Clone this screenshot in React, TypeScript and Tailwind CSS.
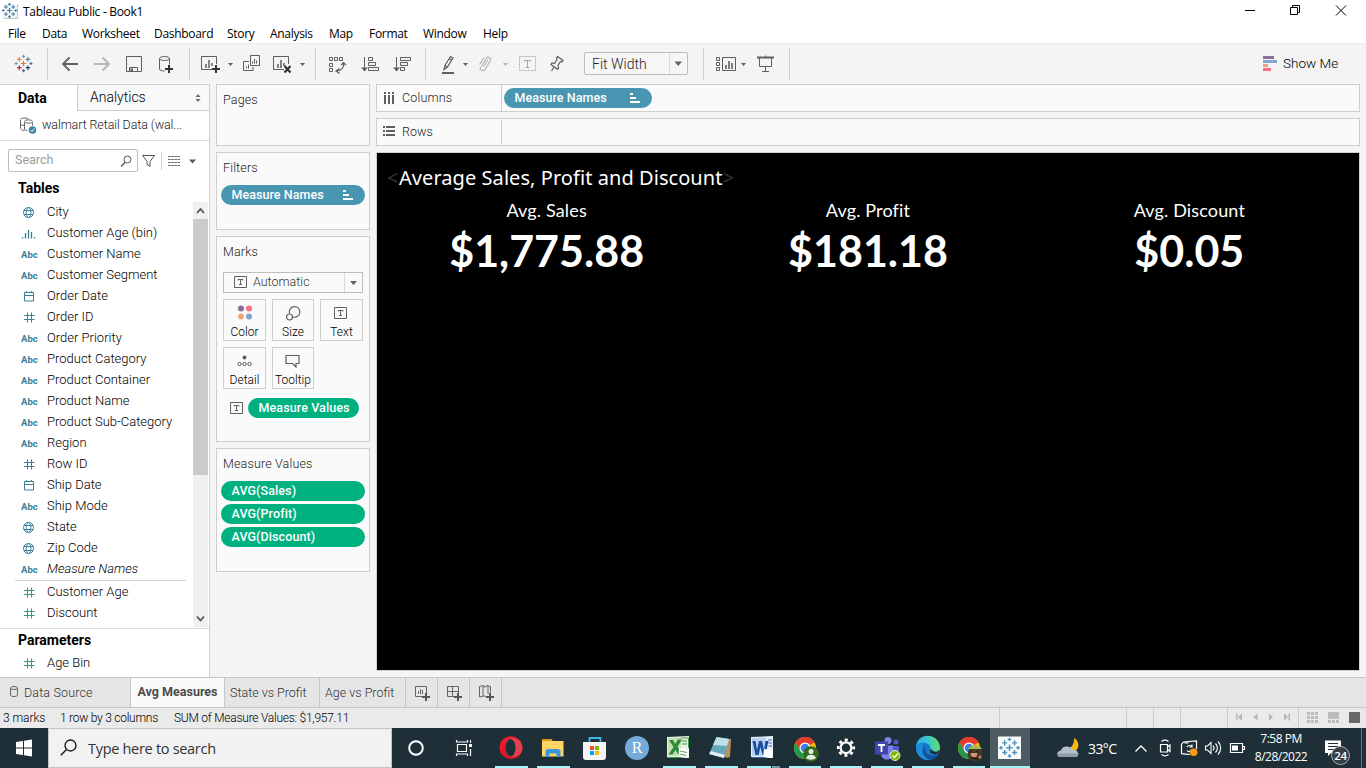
import React from "react";

type Kids = { children?: React.ReactNode };

const G = "#5f5f5f";

/* Icon cell: the view box uses window coordinates, so strokes land on whole pixels. */
function Cell({ x, y, w, h, children }: Kids & { x: number; y: number; w: number; h: number }) {
  return (
    <svg width={w} height={h} viewBox={`${x} ${y} ${w} ${h}`} className="block shrink-0" fill="none">
      {children}
    </svg>
  );
}

const Caret = ({ x, y, c = G }: { x: number; y: number; c?: string }) => (
  <path d={`M${x - 2.5} ${y - 1.5}h5l-2.5 3z`} fill={c} />
);

function Plus({ x, y, r, c, w = 1 }: { x: number; y: number; r: number; c: string; w?: number }) {
  return <path d={`M${x - r} ${y}h${2 * r}M${x} ${y - r}v${2 * r}`} stroke={c} strokeWidth={w} />;
}

function Logo({ x, y, s = 1, mono }: { x: number; y: number; s?: number; mono?: string }) {
  const p: [number, number, number, string][] = [
    [0, 0, 2.8, "#e8762d"],
    [-4.2, -4.2, 2.2, "#eb912c"],
    [4.4, -4.2, 2.2, "#59879b"],
    [-4.2, 4.2, 2.2, "#c72035"],
    [4.4, 4.2, 2.2, "#1f457e"],
    [-7.4, 0, 1.5, "#7199a6"],
    [7.4, 0, 1.5, "#5b6591"],
    [0, -7.2, 1.5, "#7199a6"],
    [0, 7.2, 1.5, "#5b6591"],
  ];
  return (
    <g>
      {p.map(([dx, dy, r, c], i) => (
        <Plus key={i} x={x + dx * s} y={y + dy * s} r={r * s} c={mono ?? c} w={1.2 * s} />
      ))}
    </g>
  );
}

function TitleBar() {
  return (
    <div className="flex h-[22px] items-center bg-white font-['Open_Sans',sans-serif] text-black">
      <Cell x={0} y={0} w={23} h={22}>
        <path d="M3.5 18.5h14v-14" stroke="#c4c4c4" />
        <rect x="3" y="4" width="14" height="14" fill="#f4f4f4" />
        <Logo x={9.5} y={10.5} s={0.85} mono="#2f7fae" />
      </Cell>
      <span className="grow pt-0.5 text-[12px] tracking-[-0.3px]">Tableau Public - Book1</span>
      <Cell x={1240} y={0} w={126} h={22}>
        <path d="M1245 10.5h10" stroke="#000" />
        <path d="M1290.5 7.5h7v7h-7zM1292.5 7v-1.5h7v7h-2" stroke="#000" />
        <path d="M1336 5.5l10 10M1346 5.5l-10 10" stroke="#000" />
      </Cell>
    </div>
  );
}

function MenuBar() {
  return (
    <div className="flex h-[21px] items-center bg-white pl-2 pt-0.5 font-['Open_Sans',sans-serif] text-[12px] tracking-[-0.3px] text-black">
      <span className="w-[34px]">File</span>
      <span className="w-10">Data</span>
      <span className="w-[72px]">Worksheet</span>
      <span className="w-[73px]">Dashboard</span>
      <span className="w-[43px]">Story</span>
      <span className="w-[59px]">Analysis</span>
      <span className="w-10">Map</span>
      <span className="w-[54px]">Format</span>
      <span className="w-[60px]">Window</span>
      <span>Help</span>
    </div>
  );
}

const Sep = () => <div className="my-1 w-px shrink-0 bg-[#cfcfcf]" />;

function Toolbar() {
  return (
    <div className="flex h-[41px] border-t border-[#ececec] bg-[#f4f4f4]">
      <Cell x={0} y={44} w={47} h={40}><Logo x={23.5} y={63.5} /></Cell>
      <Sep />
      <Cell x={48} y={44} w={141} h={40}>
        <path d="M78 64H63M69.5 57.5l-6.5 6.5 6.5 6.5" stroke={G} strokeWidth="1.8" />
        <path d="M94 64h15M102.5 57.5l6.5 6.5-6.5 6.5" stroke="#b4b4b4" strokeWidth="1.8" />
        <path d="M126.5 56.5h15v15h-15z" stroke={G} />
        <path d="M129.5 71v-3.5h8V71" stroke={G} />
        <path d="M130.5 68.5h2.5v3h-2.5z" fill={G} />
        <path d="M159.5 58.5v10.5c0 1.3 2 2 5 2M169.5 58.5v6" stroke={G} />
        <ellipse cx="164.5" cy="58.5" rx="5" ry="2" stroke={G} />
        <Plus x={169} y={69} r={4} c="#333" w={2} />
      </Cell>
      <Sep />
      <Cell x={190} y={44} w={125} h={40}>
        <path d="M212 69.5h-10.5v-13h15V64" stroke={G} />
        <path d="M206 68v-4M209 68v-8M212 66v-3" stroke={G} strokeWidth="1.5" />
        <Plus x={216} y={69} r={4} c="#333" w={2} />
        <Caret x={230.5} y={64.5} />
        <path d="M250.5 55.5h9v10h-9zM249 61.5h-5.5v9h9.5V67" stroke={G} />
        <path d="M252.500 63.500v-2M254.500 63.500v-4.500M256.500 63.500v-3M246.500 68.500v-2M248.500 68.500v-4" stroke={G} />
        <path d="M284 69.5h-10.500v-13h15V64" stroke={G} />
        <path d="M278 68v-4M281 68v-8M284 66v-3" stroke={G} strokeWidth="1.5" />
        <path d="M284.500 66l6 6.500M290.500 66l-6 6.500" stroke="#333" strokeWidth="2.200" />
        <Caret x={302.500} y={64.500} />
      </Cell>
      <Sep />
      <Cell x={316} y={44} w={109} h={40}>
        <path d="M329.500 57.500h3v3h-3zM334.500 57.500h3v3h-3zM339.500 57.500h3v3h-3zM329.500 63.500h3v3h-3zM329.500 68.500h3v3h-3z" stroke={G} />
        <path d="M343.500 63c1 4-2 7.500-6.500 8M339.500 68.500l-3.500 2.500 3.500 2.500M341 65l2.500-2.500 2.500 2.500" stroke={G} strokeWidth="1.200" />
        <path d="M364.500 57v13M368.500 57.500h4v3h-4zM368.500 62.500h7v3h-7zM368.500 67.500h10v3h-10z" stroke={G} />
        <path d="M361 67.500h7l-3.500 4z" fill={G} />
        <path d="M396.500 57v13M400.500 57.500h10v3h-10zM400.500 62.500h7v3h-7zM400.500 67.500h4v3h-4z" stroke={G} />
        <path d="M393 67.500h7l-3.500 4z" fill={G} />
      </Cell>
      <Sep />
      <Cell x={426} y={44} w={158} h={40}>
        <path d="M444 69.500l1-4 5.500-9 2.500 1.500-5.500 9zM445 65.500l2.500 1.500M449 58.500l2.500 1.500" stroke={G} strokeWidth="1.200" />
        <path d="M442 73h12" stroke={G} strokeWidth="2" />
        <Caret x={465.500} y={64.500} />
        <path d="M481.500 66.500l5-8.500c1.500-2 5 0 4 2.500l-5.500 9c-1.500 2.500-6 .5-4.500-2.500M484 66.500l4-7M479.500 64.500l4.500-7" stroke="#b4b4b4" strokeWidth="1.200" />
        <Caret x={505.500} y={64.500} c="#b4b4b4" />
        <path d="M519.500 56.500h16v14h-16z" stroke="#b0b0b0" strokeDasharray="2 1" />
        <path d="M524.500 62v-1.500h6v1.500M527.500 60.500v7M525.500 67.500h4" stroke="#a4a4a4" />
        <path d="M557.500 56.500l5.500 4-1 1.500-1.500-.5-2.500 4 .5 3-1.500.5-6-4.500 1-1.500 2.500.5 2.500-4-.5-1.500zM554 67l-2.500 4" stroke={G} strokeWidth="1.200" />
      </Cell>
      <div className="mt-2 flex h-[23px] w-[104px] shrink-0 rounded-[2px] border border-[#bdbdbd] bg-[#f6f6f6] font-['Roboto',sans-serif] text-[14px] font-light leading-[22px] text-[#222]">
        <span className="w-[85px] border-r border-[#dadada] pl-[7px]">Fit Width</span>
        <Cell x={670} y={53} w={17} h={21}><path d="M674.500 61.500h7.500l-3.750 4.500z" fill={G} /></Cell>
      </div>
      <div className="w-[15px] shrink-0" />
      <Sep />
      <Cell x={704} y={44} w={85} h={40}>
        <path d="M716.500 57.500h3v3h-3zM716.500 62.500h3v3h-3zM716.500 67.500h3v3h-3zM722.500 57.500h13v13h-13z" stroke={G} />
        <path d="M726 69v-4M729 69v-8M732 69v-6" stroke={G} strokeWidth="1.600" />
        <Caret x={743.500} y={64.500} />
        <path d="M757 57.500h17" stroke={G} strokeWidth="2" />
        <path d="M759.500 58v8.500h12V58M765.500 67v4.500M762 71.500h7M765.500 55.500v2" stroke={G} />
      </Cell>
      <Sep />
      <div className="flex grow items-center justify-end pr-[29px]">
        <Cell x={1262} y={44} w={21} h={40}>
          <path d="M1263 56h11v3h-11z" fill="#85719a" />
          <path d="M1263 60h14v3h-14z" fill="#80a5cf" />
          <path d="M1263 64h5v3h-5z" fill="#f2a17c" />
          <path d="M1263 68h8v3h-8z" fill="#fb6e80" />
        </Cell>
        <span className="w-[54px] whitespace-nowrap pb-0.5 font-['Roboto',sans-serif] text-[13.5px] font-light text-black">Show Me</span>
      </div>
    </div>
  );
}

type Kind = "globe" | "bin" | "abc" | "date" | "num" | "numG";

function FieldIcon({ k }: { k: Kind }) {
  const c = k === "numG" ? "#2f9e78" : "#39809b";
  if (k === "abc")
    return <span className="w-[27px] pl-px pt-px font-['Roboto',sans-serif] text-[9.5px] font-bold text-[#39809b]">Abc</span>;
  return (
    <svg width="27" height="21" viewBox="-1 0 27 21" fill="none" stroke={c} className="block shrink-0">
      {k === "globe" && <path d="M7.500 5.500a5 5 0 1 0 .01 0M7.500 5.500c-3.200 2-3.200 8 0 10M7.500 5.500c3.200 2 3.200 8 0 10M3 8.500h9M3 12.500h9" />}
      {k === "bin" && <path d="M1.500 14v1.500M4.500 10v5.500M7.500 7v8.500M10.500 9v6.500M13.500 14v1.500" strokeWidth="1.300" />}
      {k === "date" && <path d="M3.500 6.500h9v8.500h-9zM3 9.500h10M5.500 5v1.500M10.500 5v1.500" />}
      {(k === "num" || k === "numG") && <path d="M6.500 5.500v10M10.500 5.500v10M3 8.500h10.500M3 12.500h10.500" />}
    </svg>
  );
}

function Field({ k, name, italic }: { k: Kind; name: string; italic?: boolean }) {
  return (
    <div className="flex h-[21px] items-center pl-5 font-['Roboto',sans-serif] text-[13px] font-light text-black">
      <FieldIcon k={k} />
      <span className={italic ? "whitespace-nowrap pb-px italic" : "whitespace-nowrap pb-px"}>{name}</span>
    </div>
  );
}

const dims: [Kind, string][] = [
  ["globe", "City"],
  ["bin", "Customer Age (bin)"],
  ["abc", "Customer Name"],
  ["abc", "Customer Segment"],
  ["date", "Order Date"],
  ["num", "Order ID"],
  ["abc", "Order Priority"],
  ["abc", "Product Category"],
  ["abc", "Product Container"],
  ["abc", "Product Name"],
  ["abc", "Product Sub-Category"],
  ["abc", "Region"],
  ["num", "Row ID"],
  ["date", "Ship Date"],
  ["abc", "Ship Mode"],
  ["globe", "State"],
  ["globe", "Zip Code"],
];

function Sidebar() {
  return (
    <aside className="flex w-[210px] shrink-0 flex-col border-r border-t border-[#cfcfcf] bg-white font-['Roboto',sans-serif]">
      <div className="flex h-[26px] shrink-0 text-[14px]">
        <div className="flex w-[77px] items-center pl-[18px] font-bold text-black">Data</div>
        <div className="flex grow items-center border-b border-l border-[#cfcfcf] bg-[#f9f9f9] pl-3 font-light text-black">
          <span className="grow">Analytics</span>
          <svg width="15" height="12" viewBox="0 0 15 12" fill="#5f6f7f"><path d="M1.500 5h5L4 2zM1.500 7h5L4 10z" /></svg>
        </div>
      </div>
      <div className="flex h-[30px] shrink-0 items-center border-b border-[#dcdcdc] pl-5 text-[12.5px] font-light text-[#222]">
        <svg width="22" height="20" viewBox="20 115 22 20" fill="none" stroke="#666">
          <path d="M20.500 119v8.500c0 1 1.500 2 4 2M20.500 118.500c0-1 1.500-1.500 4.500-1.500 1.500 0 3 .3 3.500.8M20.500 123c.5 1 2 1.500 3.500 1.500" />
          <path d="M24.500 121.500v6.500c0 1 1.500 1.500 3 1.500M32.500 121.500v3" />
          <ellipse cx="28.500" cy="120.500" rx="4" ry="1.700" />
          <circle cx="32.500" cy="129" r="3.800" fill="#3c86a5" stroke="none" />
          <path d="M30.500 129l1.500 1.500 2.500-3" stroke="#fff" />
        </svg>
        <span className="tracking-[-0.1px]">walmart Retail Data (wal...</span>
      </div>
      <div className="flex h-[39px] shrink-0 items-center pl-2">
        <div className="flex h-[23px] w-[130px] items-center rounded-[2px] border border-[#bdbdbd] pl-1.5 text-[12.5px] text-[#9b9b9b]">
          <span className="grow">Search</span>
          <svg width="18" height="14" viewBox="0 0 18 14" fill="none" stroke="#555"><circle cx="8.500" cy="5.500" r="3.500" /><path d="M6 8.500L2 12.500" strokeWidth="1.300" /></svg>
        </div>
        <Cell x={138} y={149} w={70} h={22}>
          <path d="M142.500 154.500h12l-4.500 6v5l-3-2v-3z" stroke="#555" />
          <path d="M161.500 151v18" stroke="#d0d0d0" />
          <path d="M168 155.500h12M168 158.500h12M168 161.500h12M168 164.500h12" stroke="#666" strokeDasharray="2.500 .7" />
          <path d="M189 158.500h7l-3.500 4z" fill="#555" />
        </Cell>
      </div>
      <div className="flex h-[22px] shrink-0 items-center pb-[5px] pl-[18px] text-[14px] font-bold text-black">Tables</div>
      <div className="flex h-[427px] shrink-0 border-b border-[#dcdcdc]">
        <div className="w-[193px]">
          {dims.map(([k, n]) => <Field key={n} k={k} name={n} />)}
          <Field k="abc" name="Measure Names" italic />
          <div className="mb-px ml-[15px] mr-[7px] h-px bg-[#d4d4d4]" />
          <Field k="numG" name="Customer Age" />
          <Field k="numG" name="Discount" />
        </div>
        <div className="flex h-[425px] w-[15px] flex-col bg-[#f0f0f0]">
          <svg width="15" height="17" viewBox="0 0 15 17" fill="none" stroke="#505050" strokeWidth="1.800"><path d="M4 11l3.500-4 3.500 4" /></svg>
          <div className="h-[256px] bg-[#cbcbcb]" />
          <div className="grow" />
          <svg width="15" height="17" viewBox="0 0 15 17" fill="none" stroke="#505050" strokeWidth="1.800"><path d="M4 6.500l3.500 4 3.500-4" /></svg>
        </div>
      </div>
      <div className="flex h-[24px] shrink-0 items-center pb-px pl-[18px] text-[14px] font-bold text-black">Parameters</div>
      <Field k="numG" name="Age Bin" />
    </aside>
  );
}

const Card = ({ title, h, children }: Kids & { title: string; h: string }) => (
  <section className={`${h} flex shrink-0 flex-col border border-[#cfcfcf] bg-[#fafafa]`}>
    <h2 className="h-8 pl-1.5 text-[12.5px] font-light leading-[29px] tracking-[0.15px] text-[#222]">{title}</h2>
    {children}
  </section>
);

function BluePill({ w }: { w: string }) {
  return (
    <div className={`${w} flex h-5 items-center rounded-full bg-[#4996b2] pl-[10.5px] pr-3 text-[12.5px] font-medium text-white`}>
      <span className="grow tracking-[0.05px]">Measure Names</span>
      <svg width="10" height="10" viewBox="0 0 10 10" fill="#fff"><path d="M0 0h3v2H0zM0 4h6v2H0zM0 8h10v2H0z" /></svg>
    </div>
  );
}

const GreenPill = ({ children, w }: Kids & { w: string }) => (
  <div className={`${w} flex h-5 items-center rounded-full bg-[#00b180] pl-[10.5px] text-[12.5px] font-medium tracking-[0.1px] text-white`}>{children}</div>
);

const TIcon = () => (
  <svg width="14" height="13" viewBox="0 0 14 13" fill="none" stroke={G} className="block">
    <path d="M.5.5h12v11H.5zM4 4.5v-1h5v1M6.5 3.5v5M5 8.500h3" />
  </svg>
);

const MarkButton = ({ label, w, children }: Kids & { label: string; w: string }) => (
  <div className={`${w} flex h-[42px] flex-col items-center border border-[#cfcfcf] bg-[#fafafa]`}>
    <div className="flex h-[25px] items-center justify-center">{children}</div>
    <span className="whitespace-nowrap text-[12px] font-light leading-[14px] text-black">{label}</span>
  </div>
);

function Shelves() {
  return (
    <div className="ml-1.5 flex w-[154px] shrink-0 flex-col gap-1.5 font-['Roboto',sans-serif]">
      <Card title="Pages" h="h-[62px]" />
      <Card title="Filters" h="h-[78px]">
        <div className="pl-1"><BluePill w="w-36" /></div>
      </Card>
      <Card title="Marks" h="h-[206px]">
        <div className="px-1.5 pt-[3px]">
          <div className="flex h-[21px] items-center border border-[#bdbdbd] pl-2.5 text-[12.5px] font-light text-[#333]">
            <TIcon />
            <span className="grow pl-[5px]">Automatic</span>
            <div className="flex h-full w-[18px] items-center justify-center border-l border-[#dadada]">
              <svg width="7" height="4" viewBox="0 0 7 4" fill={G}><path d="M0 0h7L3.500 4z" /></svg>
            </div>
          </div>
          <div className="mt-1.5 grid grid-cols-[43px_42px_43px] gap-1.5">
            <MarkButton label="Color" w="w-[43px]">
              <svg width="14" height="15" viewBox="0 0 14 15"><circle cx="3" cy="3.500" r="3" fill="#85719a" /><circle cx="11" cy="3.500" r="3" fill="#fb6e80" /><circle cx="3" cy="11.500" r="3" fill="#f2a17c" /><circle cx="11" cy="11.500" r="3" fill="#80a5cf" /></svg>
            </MarkButton>
            <MarkButton label="Size" w="w-[42px]">
              <svg width="16" height="16" viewBox="0 0 16 16" fill="none" stroke={G} strokeWidth="1.200"><path d="M4.500 8.500a5.300 5.300 0 1 1 3.500 3.500" /><circle cx="4.500" cy="12" r="3" /></svg>
            </MarkButton>
            <MarkButton label="Text" w="w-[43px]"><div className="pr-px pt-0.5"><TIcon /></div></MarkButton>
            <MarkButton label="Detail" w="w-[43px]">
              <svg width="15" height="14" viewBox="0 0 15 14" fill="none" stroke={G}><circle cx="7.500" cy="3.500" r="2" fill={G} stroke="none" /><circle cx="2.500" cy="10" r="1.700" /><circle cx="7.500" cy="10" r="1.700" /><circle cx="12.500" cy="10" r="1.700" /></svg>
            </MarkButton>
            <MarkButton label="Tooltip" w="w-[42px]">
              <svg width="15" height="14" viewBox="0 0 15 14" fill="none" stroke={G} strokeWidth="1.200" className="mr-px"><path d="M1 1.500h13v8h-3v3.500L7.500 9.500H1z" /></svg>
            </MarkButton>
          </div>
        </div>
        <div className="flex items-center pl-[13px] pt-[9px]">
          <TIcon />
          <div className="ml-1"><GreenPill w="w-[111px]">Measure Values</GreenPill></div>
        </div>
      </Card>
      <Card title="Measure Values" h="h-[124px]">
        <div className="flex flex-col gap-[3px] pl-1">
          <GreenPill w="w-36">AVG(Sales)</GreenPill>
          <GreenPill w="w-36">AVG(Profit)</GreenPill>
          <GreenPill w="w-36">AVG(Discount)</GreenPill>
        </div>
      </Card>
    </div>
  );
}

const metrics: [string, string][] = [
  ["Avg. Sales", "$1,775.88"],
  ["Avg. Profit", "$181.18"],
  ["Avg. Discount", "$0.05"],
];

function Workspace() {
  return (
    <main className="ml-1.5 mr-1.5 flex grow flex-col gap-1.5 font-['Roboto',sans-serif] text-[12.5px] text-[#222]">
      <div className="flex h-7 shrink-0 border border-[#cfcfcf] bg-[#fafafa]">
        <div className="flex w-[125px] items-center border-r border-[#cfcfcf] pl-1.5">
          <svg width="19" height="12" viewBox="0 0 19 12" fill={G}><path d="M1 0h2v2H1zM5 0h2v2H5zM9 0h2v2H9zM1 3h2v9H1zM5 3h2v9H5zM9 3h2v9H9z" /></svg>
          <span className="font-light tracking-[0.15px]">Columns</span>
        </div>
        <div className="flex items-center pl-0.5"><BluePill w="w-[148px]" /></div>
      </div>
      <div className="flex h-7 shrink-0 border border-[#cfcfcf] bg-[#fafafa]">
        <div className="flex w-[125px] items-center border-r border-[#cfcfcf] pl-1.5">
          <svg width="19" height="12" viewBox="0 0 19 12" fill={G}><path d="M0 0h2v2H0zM0 4h2v2H0zM0 8h2v2H0zM3 0h9v2H3zM3 4h9v2H3zM3 8h9v2H3z" /></svg>
          <span className="font-light">Rows</span>
        </div>
      </div>
      <div className="flex h-[519px] flex-col border border-[#cfcfcf] bg-black pt-2.5">
        <div className="flex h-[30px] items-center whitespace-nowrap pl-2.5 font-['Noto_Sans',sans-serif] text-[20px] tracking-[0.06px] text-white">
          <span className="w-3 text-[#333]">&lt;</span>
          <span>Average Sales, Profit and Discount</span>
          <span className="text-[#333]">&gt;</span>
        </div>
        <div className="grid grid-cols-3 px-[9px] font-['Lato',sans-serif] text-white">
          {metrics.map(([label, value]) => (
            <div key={label} className="flex flex-col items-center">
              <div className="h-[27px] overflow-hidden text-[18px] leading-[35px] tracking-[0.15px]">{label}</div>
              <div className="h-[60px] text-[43px] font-bold leading-[62px]">{value}</div>
            </div>
          ))}
        </div>
      </div>
    </main>
  );
}

function SheetTabs() {
  return (
    <div className="flex h-[31px] shrink-0 border-y border-[#c6c6c6] bg-[#e5e5e5] font-['Roboto',sans-serif] text-[12.5px] font-light text-[#333]">
      <div className="flex w-[131px] items-center border-r border-[#c6c6c6] pl-[9px] pt-px">
        <svg width="15" height="13" viewBox="0 0 15 13" fill="none" stroke="#666" className="mb-[3px]"><ellipse cx="5" cy="3" rx="3.500" ry="1.500" /><path d="M1.500 3v7c0 2 7 2 7 0V3" /></svg>
        <span className="tracking-[0.15px]">Data Source</span>
      </div>
      <div className="flex w-[94px] items-center justify-center border-r border-[#c6c6c6] bg-[#fafafa] font-bold text-[#4b4b4b]">Avg Measures</div>
      <div className="flex w-[95px] items-center border-r border-[#c6c6c6] pl-[5px] pt-px">State vs Profit</div>
      <div className="flex w-[86px] items-center border-r border-[#c6c6c6] pl-[5px] pt-px">Age vs Profit</div>
      <div className="border-r border-[#c6c6c6]">
        <Cell x={406} y={678} w={31} h={29}>
          <path d="M423 696.500h-7.500v-10h11v7" stroke="#666" /><path d="M418.500 694v-3M420.500 694v-5M422.500 694v-4" stroke="#666" /><Plus x={426} y={697} r={4} c="#555" w={2} />
        </Cell>
      </div>
      <div className="border-r border-[#c6c6c6]">
        <Cell x={438} y={678} w={31} h={29}>
          <path d="M455 696.500h-7.500v-10h11v7M447.500 691.500h11M452.500 686.500v10" stroke="#666" /><Plus x={458} y={697} r={4} c="#555" w={2} />
        </Cell>
      </div>
      <div className="border-r border-[#c6c6c6]">
        <Cell x={470} y={678} w={31} h={29}>
          <path d="M487 697.500l-2-1.500h-1l-4.500 1v-10.500l4-1 1.500 2 1.500-2 4 1v6M483 686v10M488 686v8" stroke="#666" /><Plus x={490} y={697} r={4} c="#555" w={2} />
        </Cell>
      </div>
    </div>
  );
}

function StatusBar() {
  return (
    <div className="flex h-5 shrink-0 items-center whitespace-nowrap bg-[#eaeaea] font-['Roboto',sans-serif] text-[12px] font-light tracking-[-0.25px] text-black">
      <span className="w-[57px] pl-[3px] tracking-[-0.05px]">3 marks</span>
      <span className="w-[117px] pl-[3px]">1 row by 3 columns</span>
      <span className="grow">SUM of Measure Values: $1,957.11</span>
      <div className="h-full w-[127px] border-l border-[#cacaca]" />
      <div className="h-full w-[27px] border-l border-[#cacaca]" />
      <div className="h-full w-[27px] border-l border-[#cacaca]" />
      <div className="h-full w-[47px] border-l border-[#cacaca]" />
      <div className="h-full w-[71px] border-l border-[#cacaca]">
        <Cell x={1228} y={708} w={70} h={20}>
          <path d="M1236 713.500h1.500v7h-1.500zM1242 713.500v7l-4-3.500zM1257.500 713.500v7l-4-3.500zM1269 713.500v7l4-3.500zM1284 713.500v7l4-3.500zM1288.500 713.500h1.500v7h-1.500z" fill="#b6b6b6" />
        </Cell>
      </div>
      <div className="h-full w-[68px] border-l border-[#cacaca]">
        <Cell x={1299} y={708} w={67} h={20}>
          <path d="M1307 712h3v3h-3zM1311 712h3v3h-3zM1315 712h3v3h-3zM1307 716h3v3h-3zM1311 716h3v3h-3zM1315 716h3v3h-3zM1307 720h3v3h-3zM1311 720h3v3h-3zM1315 720h3v3h-3zM1328 712h11v7h-11zM1328 720h3v3h-3zM1332 720h3v3h-3zM1336 720h3v3h-3z" fill="#bcbcbc" />
          <path d="M1349 712h11v11h-11z" fill="#686868" />
        </Cell>
      </div>
    </div>
  );
}

const Run = ({ x, w = 33 }: { x: number; w?: number }) => <rect x={x} y="766" width={w} height="2" fill="#a3f5fa" />;

function Chrome({ x, y }: { x: number; y: number }) {
  return (
    <g>
      <circle cx={x} cy={y} r="11" fill="#fbbc05" />
      <path d={`M${x} ${y}L${x - 9.5} ${y - 5.5}A11 11 0 0 1 ${x + 9.5} ${y - 5.5}z`} fill="#ea4335" />
      <path d={`M${x} ${y - 5.5}h9.5A11 11 0 0 0 ${x - 9.5} ${y - 5.5}L${x - 4.7} ${y + 2.7}z`} fill="#e33b2e" />
      <path d={`M${x - 9.5} ${y - 5.5}A11 11 0 0 0 ${x} ${y + 11}l4.7-8.3-9.4 0z`} fill="#229a4c" />
      <circle cx={x} cy={y} r="5.5" fill="#fff" />
      <circle cx={x} cy={y} r="4.3" fill="#3b7ded" />
    </g>
  );
}

function Taskbar() {
  return (
    <footer className="flex h-10 shrink-0 bg-[#1f2f37] font-['Open_Sans',sans-serif] text-white">
      <Cell x={0} y={728} w={48} h={40}>
        <path d="M16 742l7-1v6.500h-7zM24 740.800l8-1.200v7.900h-8zM16 748.500h7v6.500l-7-1zM24 748.500h8v7.900l-8-1.200z" fill="#fff" />
      </Cell>
      <div className="flex w-[344px] shrink-0 items-center border border-[#c3c3c3] bg-[#f2f2f2] pl-[11px] text-[14.5px] tracking-[-0.3px] text-[#333]">
        <svg width="28" height="20" viewBox="0 0 28 20" fill="none" stroke="#111" strokeWidth="1.300"><circle cx="10.500" cy="7.500" r="5.500" /><path d="M6.500 11.500L.8 17.200" /></svg>
        <span className="pt-px">Type here to search</span>
      </div>
      <Cell x={392} y={728} w={98} h={40}>
        <circle cx="416" cy="748" r="6.800" stroke="#fff" strokeWidth="2" />
        <path d="M457.500 744.500h9v7h-9zM456.500 740v2h11v-2M456.500 756v-2h11v2M470.500 740v3M470.500 749v7" stroke="#fff" strokeWidth="1.200" />
        <path d="M469 744h3v3h-3z" fill="#fff" />
      </Cell>
      <Cell x={490} y={728} w={42} h={40}>
        <defs><linearGradient id="op" x1="0" y1="0" x2="1" y2="1"><stop stopColor="#ff1b2d" /><stop offset="1" stopColor="#c00f25" /></linearGradient></defs>
        <ellipse cx="511" cy="747.700" rx="11.500" ry="11.500" fill="url(#op)" />
        <path d="M506 741c4-5 12-3 14.500 1 2.500 3.500 2.500 8 0 11.500-3 4-10 6-14.500.5z" fill="#e2404d" />
        <ellipse cx="510.500" cy="747.700" rx="5" ry="8.800" fill="#1f2f37" />
        <Run x={495} />
      </Cell>
      <Cell x={532} y={728} w={42} h={40}>
        <path d="M542 739h9l1.500 2H563.500v15.500h-21.500z" fill="#ffd664" />
        <path d="M542 739h9l1.500 2H542z" fill="#dc9a18" />
        <path d="M545.500 757v-6.500l2-1.500h11l2 1.500v6.500h-4v-3.500h-7v3.500z" fill="#3b97dd" />
        <Run x={537} />
      </Cell>
      <Cell x={574} y={728} w={42} h={40}>
        <path d="M589.500 743v-5h11v5" stroke="#3bb5ea" strokeWidth="1.800" />
        <path d="M583 742h23v15a3 3 0 0 1-3 3h-17a3 3 0 0 1-3-3z" fill="#f4f4f4" />
        <path d="M590 746h4v4h-4z" fill="#f25022" /><path d="M595 746h4v4h-4z" fill="#7fba00" />
        <path d="M590 751h4v4h-4z" fill="#00a4ef" /><path d="M595 751h4v4h-4z" fill="#ffb900" />
      </Cell>
      <div className="flex w-[42px] shrink-0 items-center justify-center">
        <div className="flex h-6 w-6 items-center justify-center rounded-full bg-[#75aadb] font-['Liberation_Serif',serif] text-[16px]">R</div>
      </div>
      <Cell x={658} y={728} w={42} h={40}>
        <path d="M667 737l22-1v22l-22-1z" fill="#e9f3e4" /><path d="M668 738l13-.5v19l-13-1z" fill="#c1e0b2" />
        <path d="M669 740h4l2 4 3-4.500h4l-4.500 7 5 8.500h-4l-3-5-3 4.500h-4l5-7.500z" fill="#2f8a3a" />
        <path d="M681 738h7.500v10M667 757.500h14" stroke="#3d9a45" /><path d="M682 741h5M682 744h5" stroke="#8cc58a" strokeWidth="2" /><path d="M679 748l10 2-1.500 8-9-2z" fill="#fff" /><path d="M680 751l7 1.500M679.500 754l7 1.500" stroke="#5fa860" />
        <Run x={663} />
      </Cell>
      <Cell x={700} y={728} w={42} h={40}>
        <path d="M717 738l14 1-1 18-4 1z" fill="#b7925a" />
        <path d="M716.500 737l12.500 2-5 19-15-4z" fill="#65a9bd" /><path d="M716.500 737l12.500 2-2 7-14-1z" fill="#bfe0e8" /><path d="M709 754l15 4 1-3-14-4z" fill="#e5eff0" />
        <Run x={705} />
      </Cell>
      <Cell x={742} y={728} w={42} h={40}>
        <path d="M751 737l22-1v22l-22-1z" fill="#e4edf9" /><path d="M752 738l14-.5v19l-14-1z" fill="#b8d0f0" />
        <path d="M752.500 741h3l1.500 9 2-9h3l2 9 1.500-9h3l-3 14h-3l-2-8-2 8h-3z" fill="#174f9e" />
        <path d="M768 740h4M768.500 743h3.500M768.500 746h3.500M752 757.500h14" stroke="#3368b2" /><path d="M764 749l9 1-1 8-9-1z" fill="#fff" />
        <Run x={747} w={24} /><path d="M772 766h8v2h-8z" fill="#6a9fa4" />
      </Cell>
      <Cell x={784} y={728} w={42} h={40}>
        <Chrome x={805} y={748} />
        <circle cx="811" cy="754" r="7.800" fill="#33691e" /><circle cx="811" cy="751.500" r="2.500" fill="#e7efe0" /><path d="M806 758c1-4.500 9-4.500 10 0-2 2.300-8 2.300-10 0z" fill="#e7efe0" />
        <Run x={789} w={32} />
      </Cell>
      <Cell x={826} y={728} w={41} h={40}>
        <circle cx="846" cy="747.700" r="5.400" stroke="#fff" strokeWidth="2.200" />
        <circle cx="846" cy="747.700" r="7.700" stroke="#fff" strokeWidth="2.800" strokeDasharray="3 3.048" strokeDashoffset="1.500" />
        <Run x={830} w={32} />
      </Cell>
      <Cell x={867} y={728} w={41} h={40}>
        <circle cx="888" cy="740.500" r="3.500" fill="#7b83eb" /><circle cx="896" cy="742" r="2.500" fill="#5059c9" />
        <path d="M891 746h8v6c0 4-6 6-8 2z" fill="#5059c9" /><path d="M881 745.500h12v8c0 8-12 8-12 0z" fill="#7b83eb" />
        <path d="M875 741.500h13v13h-13z" fill="#4048ab" /><path d="M878 745h7M881.500 745v7" stroke="#fff" strokeWidth="1.800" />
        <circle cx="895" cy="755.500" r="5" fill="#7fba00" stroke="#fff" strokeWidth=".8" /><path d="M892.500 755.500l2 2 3.500-4" stroke="#fff" strokeWidth="1.300" />
        <Run x={871} w={32} />
      </Cell>
      <Cell x={908} y={728} w={41} h={40}>
        <defs>
          <linearGradient id="ed" x1="0" y1=".5" x2="1" y2=".3"><stop stopColor="#2aa6e0" /><stop offset=".5" stopColor="#36c5d8" /><stop offset="1" stopColor="#6ae05a" /></linearGradient>
        </defs>
        <circle cx="928" cy="748" r="12" fill="#1775cb" />
        <path d="M916 747c1-15 23-15 24 1 0 5-4 6.500-8 6-4-.5-3-3-2-4 2-4-3-8-8-7-3.500.5-5.500 2-6 4z" fill="url(#ed)" />
        <path d="M923 745c-3 6 1 13 8 14.600-9 2-15-5-15-12.600 2-3 5-4 8-4z" fill="#1b8fdd" />
        <path d="M925 745c-3 8 6 13 13.500 9.500-2 3-6 5-9 5-6-1-9-9-4.500-14.500z" fill="#13519d" />
        <path d="M938.500 753c-2 1.500-5 1.500-7 .8-3-1-1.500-4-.8-5 4 5 8 2.500 9.300.2z" fill="#1f2f37" />
        <Run x={912} w={32} />
      </Cell>
      <Cell x={949} y={728} w={41} h={40}>
        <Chrome x={969} y={748} />
        <circle cx="975" cy="754" r="7.500" fill="#4a3527" /><path d="M968 749c3-5 11-5 14 0z" fill="#a3b94c" /><circle cx="974" cy="754" r="3.300" fill="#c89672" /><path d="M970 752h8M971 758l7 1" stroke="#1d1a1a" strokeWidth="1.300" /><circle cx="980" cy="757" r="1.500" fill="#bb8660" />
        <Run x={953} w={32} />
      </Cell>
      <div className="bg-[#4d5b63]">
        <Cell x={990} y={728} w={40} h={40}>
          <path d="M998 736.500h23v22.500h-23z" fill="#f8fafb" /><Logo x={1009.500} y={747.700} s={1.15} mono="#4d94ba" />
          <Run x={990} w={40} />
        </Cell>
      </div>
      <Cell x={1030} y={728} w={58} h={40}>
        <path d="M1074 738c6 3 6 12-1 14-3 .8-6-1-7.500-3 6 0 9-5 8.500-11z" fill="#fdb813" />
        <path d="M1061 757c-5 0-5-6 0-6.500 1-5 9-5.500 11-1 6-1 9 7 3 7.500z" fill="#b3bfca" /><path d="M1061 757c-3 0-4-2-3.500-3.500h21c0 2-1.500 3.500-3.500 3.500z" fill="#8d9dae" />
      </Cell>
      <span className="w-[42px] shrink-0 whitespace-nowrap text-[14px] leading-[41px] tracking-[-0.6px]">33°C</span>
      <Cell x={1130} y={728} w={122} h={40}>
        <path d="M1135.500 751.500l5.500-5.500 5.500 5.500" stroke="#fff" strokeWidth="1.300" />
        <path d="M1160.500 744.500h7v7.500h-7zM1167.500 747l2.500-2v6.500l-2.500-2M1161.500 741.500c2-1.500 5-1.500 7 0M1161.500 754.500c2 1.500 5 1.500 7 0" stroke="#fff" strokeWidth="1.200" />
        <path d="M1190 754.500l-8.500-1v-9l2-2.500 13-1v8M1182 754l8 .5M1184.500 743h4M1187 747c1-2 4-2 5 0M1191 750c-1 2-3 2-4 .5M1192 744.500v2.500h-2.500" stroke="#fff" strokeWidth="1.200" />
        <circle cx="1193.700" cy="752.300" r="3.800" fill="#ff9a13" />
        <path d="M1205.500 746v4h2l3.500 3.500v-11l-3.500 3.500zM1213 745.500c1.300 1.500 1.300 3.500 0 5M1215.500 743.500c2.500 2.500 2.500 6.500 0 9M1218 741.500c3.500 3.500 3.500 9.500 0 13" stroke="#fff" strokeWidth="1.100" />
        <path d="M1230.500 743.500h12v9h-12zM1242.500 746.500h2v3h-2" stroke="#fff" strokeWidth="1.200" /><path d="M1232 745.500h6v5h-6z" fill="#fff" />
      </Cell>
      <div className="flex w-[58px] shrink-0 flex-col items-center whitespace-nowrap pt-[2px] text-[12px] leading-[18px] tracking-[-0.5px]">
        <span>7:58 PM</span>
        <span>8/28/2022</span>
      </div>
      <div className="relative w-[56px] shrink-0">
        <Cell x={1310} y={728} w={56} h={40}>
          <path d="M1325 740.500h16v12.500h-10l-3 3v-3h-3z" fill="#fff" /><path d="M1328 743.500h10M1328 746.500h10M1328 749.500h7" stroke="#1f2f37" />
          <path d="M1361.500 728v40" stroke="#66747b" />
        </Cell>
        <span className="absolute left-[21px] top-[18px] flex h-[19px] w-[19px] items-center justify-center rounded-full border border-[#a5adb1] bg-[#353f45] text-[11.5px] font-semibold tracking-[-0.3px]">24</span>
      </div>
    </footer>
  );
}

export default function App() {
  return (
    <div className="flex h-[768px] w-[1366px] flex-col overflow-hidden bg-[#f4f4f4]">
      <TitleBar />
      <MenuBar />
      <Toolbar />
      <div className="flex h-[593px] shrink-0">
        <Sidebar />
        <Shelves />
        <Workspace />
      </div>
      <SheetTabs />
      <StatusBar />
      <Taskbar />
    </div>
  );
}
